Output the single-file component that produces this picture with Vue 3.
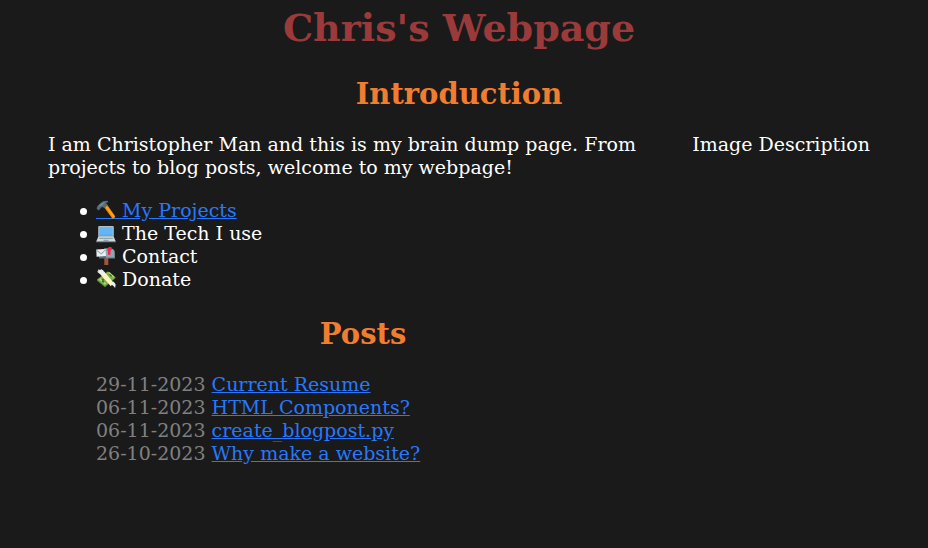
<script setup>
import { h } from 'vue'

const draw = (...shapes) => () =>
  h('svg', { class: 'icon', viewBox: '0 0 20 20', 'aria-hidden': 'true' },
    shapes.map(([fill, d]) => h('path', { fill, d })))

const Hammer = draw(
  ['#2878ff', 'M0 18h20v1H0z'],
  ['#fb8c00', 'M7.8 6.8l3-2.5 8.4 11.9q-.2 2.4-2.7 2.6z'],
  ['#ffa726', 'M9 5.8l1-.8 8.6 11.8-1.2 1z'],
  ['#546e7a', 'M.6 8.4Q1.2 5.6 4.2 3.2 7 .6 11.8.9L12.3 2.2Q10 2.3 10.2 3.4L11.6 5.2 8.6 8.2 6.6 7Q4.9 7.2 4 9L2.6 10.4z'],
  ['#78909c', 'M2.6 6.8Q5.5 2.6 9.6 1.8 7.2 3 6.8 5z'],
)
const Laptop = draw(
  ['#b0bec5', 'M3.2 3h13.6q1 0 1 1v10.5H2.2V4q0-1 1-1z'],
  ['#64b5f6', 'M3.4 4.2h13.2V13H3.4z'],
  ['#5aaaf0', 'M3.4 11.5h13.2V13H3.4z'],
  ['#cfd8dc', 'M2.2 14h15.6l1.9 4.2H.3z'],
  ['#90a4ae', 'M3.5 14.8h13l.7 1.2H2.8zM7.8 16.7h4.4l.4 1.2H7.4z'],
  ['#90a4ae', 'M.3 18.2h19.4v1H.3z'],
)
const Mailbox = draw(
  ['#a5533a', 'M8.3 11h4v8h-4z'],
  ['#607d8b', 'M8 2.5h6.5Q19 2.5 19 7v5.5H9z'],
  ['#90a4ae', 'M8.5 2.5h6.2Q18.2 2.8 18.2 7v4.5H9z'],
  ['#546e7a', 'M6 3Q9.8 2.5 10 7v5.5H3V9z'],
  ['#eceff1', 'M.3 3.5l9.4-.5.3 7-9.4.8z'],
  ['#90a4ae', 'M.3 3.5l5 3.8 4.4-4.3v1.2L5.4 8.4.4 4.8z'],
  ['#ff2244', 'M11.5 3Q11.8 1 13.6 1h2v3.2h-1.2v4.6h-2.4V5h-.5z'],
)
const Money = draw(
  ['#558b2f', 'M.8 11.4L12 2.6l7.8 6.2L9 18.2z'],
  ['#7cb342', 'M1 10.4L11.9 2.4l7.6 6L8.8 17z'],
  ['#aed581', 'M3 10.4l1.3-1.1 6 5.5L9 15.8zM12.3 3.7l1.2-.7 4.9 4.4-1.2 1z'],
  ['#33691e', 'M5.6 10.5l1.4-.7 1.3 1.2-1 .6 1.2 1.4-1.5.8-1.4-1.3.9-.5zM14 5l2.2 2-1 .8-2.1-2z'],
  ['#fff3c4', 'M4.2 5.2l4-2.6 9.2 10.9-2.6 3.7z'],
  ['#eceff1', 'M7.5 6Q3.2 5.6.8 2.6L2.4 2.4 1.8.4 4.4 1 5 0Q7.8 1 8.8 4.3zM14 15q3.2.8 5.2 4l.2-2.4.5-.4-.9-2-1.8-1.7-1.7.7z'],
)

const links = [
  { icon: Hammer, text: 'My Projects', href: '#projects' },
  { icon: Laptop, text: 'The Tech I use' },
  { icon: Mailbox, text: 'Contact' },
  { icon: Money, text: 'Donate' },
]
const posts = [
  { date: '29-11-2023', title: 'Current Resume', href: '#resume' },
  { date: '06-11-2023', title: 'HTML Components?', href: '#components' },
  { date: '06-11-2023', title: 'create_blogpost.py', href: '#create-blogpost' },
  { date: '26-10-2023', title: 'Why make a website?', href: '#website' },
]
</script>

<template>
  <main class="page">
    <h1>Chris's Webpage</h1>
    <h2>Introduction</h2>
    <div class="columns">
      <div class="content">
        <p>I am Christopher Man and this is my brain dump page. From projects to blog posts, welcome to my webpage!</p>
        <ul class="links">
          <li v-for="l in links" :key="l.text">
            <a v-if="l.href" :href="l.href"><component :is="l.icon" class="icon" /> {{ l.text }}</a>
            <template v-else><component :is="l.icon" class="icon" /> {{ l.text }}</template>
          </li>
        </ul>
        <h2>Posts</h2>
        <ul class="posts">
          <li v-for="p in posts" :key="p.title">
            <span class="date">{{ p.date }}</span> <a :href="p.href">{{ p.title }}</a>
          </li>
        </ul>
      </div>
      <p>Image Description</p>
    </div>
  </main>
</template>

<style>
body {
  background: #1a1a1a;
}
</style>

<style scoped>
.page {
  padding: 5px 58px 0 48px;
  color: #fff;
  font: 19px/23px "DejaVu Serif", serif;
}
h1 {
  margin: 0;
  color: #9b3a3a;
  font-size: 38px;
  line-height: 46px;
  text-align: center;
}
h2 {
  margin: 26px 0 21px;
  color: #f07d30;
  font-size: 29px;
  line-height: 35px;
  text-align: center;
}
.columns {
  display: flex;
  gap: 14px;
}
.content {
  flex: 1;
}
p {
  margin: 0;
}
ul {
  margin: 20px 0;
  padding-left: 48px;
  list-style: none;
}
.links li::before {
  content: "";
  display: inline-block;
  width: 7px;
  height: 7px;
  margin: 0 9px 2px -16px;
  border-radius: 50%;
  background: #fff;
}
.icon {
  width: 20px;
  height: 20px;
  vertical-align: -3px;
}
a {
  color: #2878ff;
}
.date {
  color: #808080;
}
</style>
